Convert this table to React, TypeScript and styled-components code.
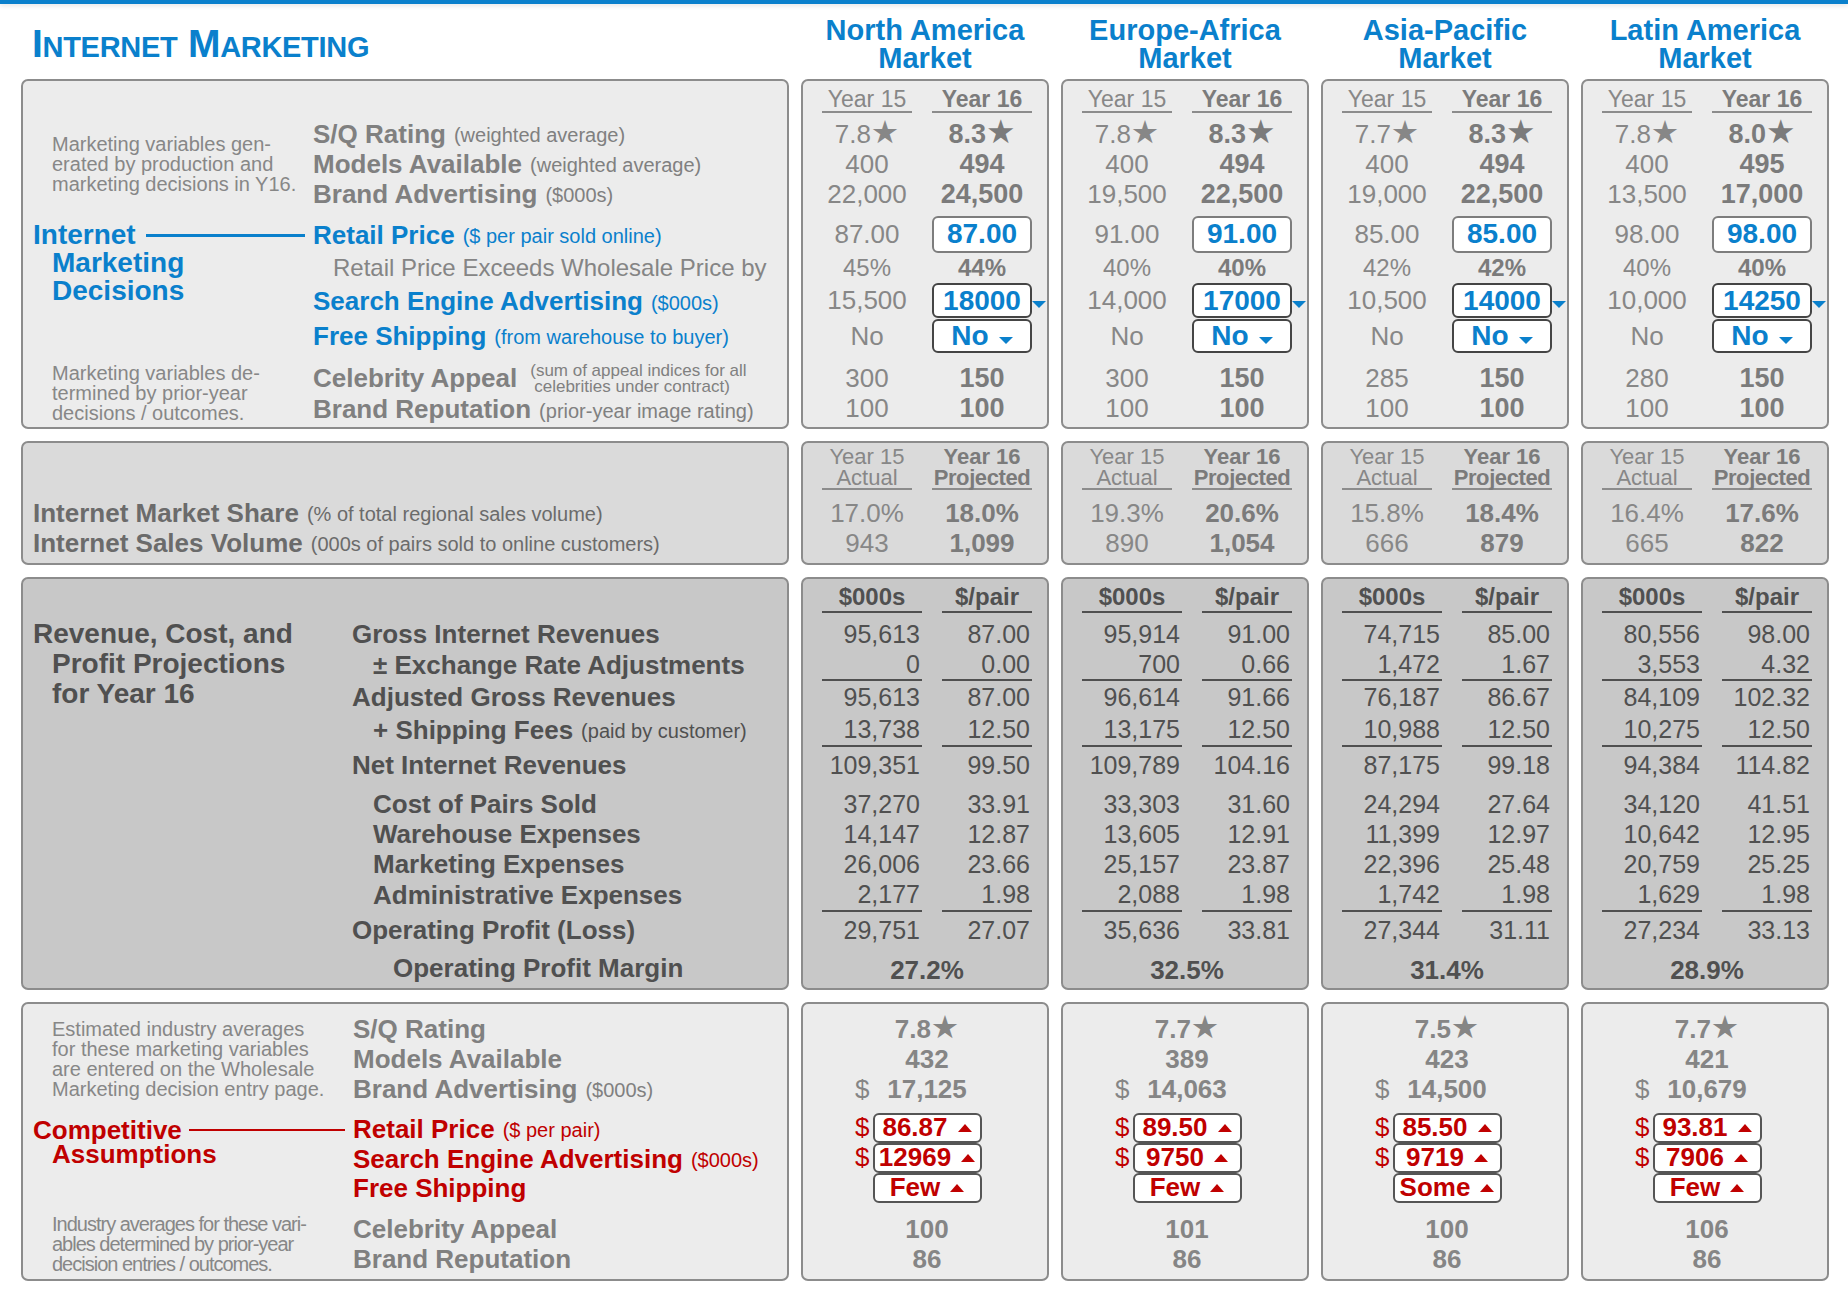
import React from 'react';
import styled, { createGlobalStyle, css } from 'styled-components';

const BLUE = '#0a80cc';
const RED = '#c00000';
const GRAY = '#808080';
const DARK = '#505050';

interface MarketData {
  name: string;
  // sq, models, brand, price, markup, search, shipping, celebrity, reputation
  y15: string[];
  y16: string[];
  share: string[];
  pnl: [string, string][];
  margin: string;
  industry: {
    sq: string;
    models: string;
    brand: string;
    price: string;
    search: string;
    shipping: string;
    celebrity: string;
    reputation: string;
  };
}

const markets: MarketData[] = [
  {
    name: 'North America',
    y15: ['7.8★', '400', '22,000', '87.00', '45%', '15,500', 'No', '300', '100'],
    y16: ['8.3★', '494', '24,500', '87.00', '44%', '18000', 'No', '150', '100'],
    share: ['17.0%', '943', '18.0%', '1,099'],
    pnl: [
      ['95,613', '87.00'],
      ['0', '0.00'],
      ['95,613', '87.00'],
      ['13,738', '12.50'],
      ['109,351', '99.50'],
      ['37,270', '33.91'],
      ['14,147', '12.87'],
      ['26,006', '23.66'],
      ['2,177', '1.98'],
      ['29,751', '27.07'],
    ],
    margin: '27.2%',
    industry: {
      sq: '7.8★',
      models: '432',
      brand: '17,125',
      price: '86.87',
      search: '12969',
      shipping: 'Few',
      celebrity: '100',
      reputation: '86',
    },
  },
  {
    name: 'Europe-Africa',
    y15: ['7.8★', '400', '19,500', '91.00', '40%', '14,000', 'No', '300', '100'],
    y16: ['8.3★', '494', '22,500', '91.00', '40%', '17000', 'No', '150', '100'],
    share: ['19.3%', '890', '20.6%', '1,054'],
    pnl: [
      ['95,914', '91.00'],
      ['700', '0.66'],
      ['96,614', '91.66'],
      ['13,175', '12.50'],
      ['109,789', '104.16'],
      ['33,303', '31.60'],
      ['13,605', '12.91'],
      ['25,157', '23.87'],
      ['2,088', '1.98'],
      ['35,636', '33.81'],
    ],
    margin: '32.5%',
    industry: {
      sq: '7.7★',
      models: '389',
      brand: '14,063',
      price: '89.50',
      search: '9750',
      shipping: 'Few',
      celebrity: '101',
      reputation: '86',
    },
  },
  {
    name: 'Asia-Pacific',
    y15: ['7.7★', '400', '19,000', '85.00', '42%', '10,500', 'No', '285', '100'],
    y16: ['8.3★', '494', '22,500', '85.00', '42%', '14000', 'No', '150', '100'],
    share: ['15.8%', '666', '18.4%', '879'],
    pnl: [
      ['74,715', '85.00'],
      ['1,472', '1.67'],
      ['76,187', '86.67'],
      ['10,988', '12.50'],
      ['87,175', '99.18'],
      ['24,294', '27.64'],
      ['11,399', '12.97'],
      ['22,396', '25.48'],
      ['1,742', '1.98'],
      ['27,344', '31.11'],
    ],
    margin: '31.4%',
    industry: {
      sq: '7.5★',
      models: '423',
      brand: '14,500',
      price: '85.50',
      search: '9719',
      shipping: 'Some',
      celebrity: '100',
      reputation: '86',
    },
  },
  {
    name: 'Latin America',
    y15: ['7.8★', '400', '13,500', '98.00', '40%', '10,000', 'No', '280', '100'],
    y16: ['8.0★', '495', '17,000', '98.00', '40%', '14250', 'No', '150', '100'],
    share: ['16.4%', '665', '17.6%', '822'],
    pnl: [
      ['80,556', '98.00'],
      ['3,553', '4.32'],
      ['84,109', '102.32'],
      ['10,275', '12.50'],
      ['94,384', '114.82'],
      ['34,120', '41.51'],
      ['10,642', '12.95'],
      ['20,759', '25.25'],
      ['1,629', '1.98'],
      ['27,234', '33.13'],
    ],
    margin: '28.9%',
    industry: {
      sq: '7.7★',
      models: '421',
      brand: '10,679',
      price: '93.81',
      search: '7906',
      shipping: 'Few',
      celebrity: '106',
      reputation: '86',
    },
  },
];

interface PnlLine {
  label: string;
  sub?: string;
  h: number;
  indent?: boolean;
  rule?: boolean;
  gapBefore?: number;
}

const pnlLines: PnlLine[] = [
  { label: 'Gross Internet Revenues', h: 30 },
  { label: '± Exchange Rate Adjustments', h: 32, indent: true, rule: true },
  { label: 'Adjusted Gross Revenues', h: 32 },
  { label: '+ Shipping Fees', sub: '(paid by customer)', h: 34, indent: true, rule: true },
  { label: 'Net Internet Revenues', h: 36 },
  { label: 'Cost of Pairs Sold', h: 30, indent: true, gapBefore: 6 },
  { label: 'Warehouse Expenses', h: 30, indent: true },
  { label: 'Marketing Expenses', h: 30, indent: true },
  { label: 'Administrative Expenses', h: 33, indent: true, rule: true },
  { label: 'Operating Profit (Loss)', h: 36 },
];

const GlobalStyle = createGlobalStyle`
  html, body {
    margin: 0;
    padding: 0;
    background: #ffffff;
  }
  body {
    font-family: "Liberation Sans", Arial, "DejaVu Sans", sans-serif;
  }
`;

const TopBar = styled.div`
  height: 4px;
  background: ${BLUE};
  box-shadow: 0 2px 4px rgba(0, 0, 0, 0.1);
`;

const Header = styled.div`
  display: grid;
  grid-template-columns: 768px repeat(4, 248px);
  column-gap: 12px;
  height: 75px;
  padding-left: 21px;
`;

const Board = styled.div`
  display: grid;
  grid-template-columns: 768px repeat(4, 248px);
  grid-template-rows: 350px 124px 413px 279px;
  column-gap: 12px;
  row-gap: 12px;
  padding-left: 21px;
`;

const Title = styled.h1`
  margin: 0;
  align-self: start;
  padding: 20px 0 0 11px;
  font-size: 39px;
  line-height: 39px;
  font-weight: bold;
  color: ${BLUE};
  white-space: nowrap;
  letter-spacing: -0.3px;
`;

const SmallCaps = styled.span`
  font-size: 29px;
`;

const MarketHead = styled.div`
  align-self: end;
  padding-bottom: 7px;
  text-align: center;
  font-size: 29px;
  line-height: 28px;
  font-weight: bold;
  color: ${BLUE};
`;

const Panel = styled.div<{ $bg: string }>`
  box-sizing: border-box;
  background: ${(p) => p.$bg};
  border: 2px solid #8c8c8c;
  border-radius: 7px;
`;

const LeftPanel = styled(Panel)<{ $top: number }>`
  padding: ${(p) => p.$top}px 0 0 10px;
`;

const ColPanel = styled(Panel)<{ $pad: number }>`
  padding-left: ${(p) => p.$pad}px;
`;

const Group = styled.div<{ $side: number; $gap?: number }>`
  display: grid;
  grid-template-columns: ${(p) => p.$side}px 1fr;
  margin-top: ${(p) => p.$gap ?? 0}px;
`;

const Note = styled.div<{ $tight?: boolean }>`
  align-self: center;
  padding-left: 19px;
  font-size: 20px;
  line-height: 20px;
  color: #878787;
  white-space: nowrap;
  letter-spacing: ${(p) => (p.$tight ? '-1px' : '0')};
`;

const Heading = styled.div<{ $tone: string; $size: number; $lh: number; $pad: number }>`
  align-self: start;
  padding-top: ${(p) => p.$pad}px;
  color: ${(p) => p.$tone};
  font-size: ${(p) => p.$size}px;
  line-height: ${(p) => p.$lh}px;
  font-weight: bold;
  white-space: nowrap;
`;

const HeadLine = styled.div`
  display: flex;
  align-items: center;
`;

const Indent = styled.div`
  padding-left: 19px;
`;

const Connector = styled.span<{ $tone: string; $thick: number; $lead: number }>`
  flex: 1;
  height: ${(p) => p.$thick}px;
  background: ${(p) => p.$tone};
  margin: 0 8px 0 ${(p) => p.$lead}px;
`;

const Stack = styled.div`
  display: flex;
  flex-direction: column;
`;

const Label = styled.div<{ $h: number; $tone?: string; $indent?: number; $drop?: number }>`
  box-sizing: border-box;
  height: ${(p) => p.$h}px;
  display: flex;
  align-items: center;
  padding-left: ${(p) => p.$indent ?? 0}px;
  padding-top: ${(p) => p.$drop ?? 0}px;
  font-size: 26px;
  font-weight: bold;
  color: ${(p) => p.$tone ?? GRAY};
  white-space: nowrap;
`;

const Sub = styled.span`
  margin-left: 8px;
  padding-top: 3px;
  font-size: 20px;
  font-weight: normal;
`;

const PlainLabel = styled.div<{ $h: number }>`
  height: ${(p) => p.$h}px;
  display: flex;
  align-items: center;
  padding-left: 20px;
  font-size: 24px;
  color: #858585;
  white-space: nowrap;
`;

const FinePrint = styled.span`
  display: inline-flex;
  flex-direction: column;
  margin-left: 13px;
  padding-top: 2px;
  font-size: 17px;
  line-height: 16px;
  font-weight: normal;
`;

const FineSecond = styled.span`
  padding-left: 4px;
`;

const Gap = styled.div<{ $h: number }>`
  height: ${(p) => p.$h}px;
`;

const Pair = styled.div<{ $h: number; $cols?: string }>`
  display: grid;
  grid-template-columns: ${(p) => p.$cols ?? '90px 100px'};
  column-gap: 20px;
  height: ${(p) => p.$h}px;
  align-items: center;
`;

const YearHead = styled.div<{ $bold?: boolean; $stacked?: boolean }>`
  box-sizing: border-box;
  align-self: stretch;
  display: flex;
  flex-direction: column;
  justify-content: flex-end;
  align-items: center;
  padding-bottom: ${(p) => (p.$stacked ? 0 : 2)}px;
  border-bottom: 2px solid #8c8c8c;
  font-size: ${(p) => (p.$stacked ? 22 : 23)}px;
  line-height: ${(p) => (p.$stacked ? 21 : 20)}px;
  font-weight: ${(p) => (p.$bold ? 'bold' : 'normal')};
  color: ${(p) => (p.$bold ? '#7b7b7b' : '#878787')};
  white-space: nowrap;
`;

const YearLine = styled.span<{ $squeeze?: boolean }>`
  letter-spacing: ${(p) => (p.$squeeze ? '-0.4px' : '0')};
`;

const Prior = styled.div<{ $size?: number }>`
  text-align: center;
  font-size: ${(p) => p.$size ?? 26}px;
  color: #878787;
  white-space: nowrap;
`;

const Current = styled.div<{ $size?: number }>`
  text-align: center;
  font-size: ${(p) => p.$size ?? 27}px;
  font-weight: bold;
  color: #7b7b7b;
  white-space: nowrap;
`;

const Star = styled.span`
  font-size: 1.22em;
  line-height: 0;
  font-weight: normal;
`;

const Entry = styled.div<{ $h: number; $frame: string; $tone: string; $size: number }>`
  position: relative;
  box-sizing: border-box;
  height: ${(p) => p.$h}px;
  border: 2px solid ${(p) => p.$frame};
  border-radius: 6px;
  background: #ffffff;
  display: flex;
  align-items: center;
  justify-content: center;
  gap: 10px;
  font-size: ${(p) => p.$size}px;
  font-weight: bold;
  color: ${(p) => p.$tone};
  white-space: nowrap;
`;

const Caret = styled.span<{ $up?: boolean; $tone: string; $outside?: boolean }>`
  display: inline-block;
  width: 0;
  height: 0;
  border-left: 7px solid transparent;
  border-right: 7px solid transparent;
  ${(p) =>
    p.$up
      ? css`
          border-bottom: 8px solid ${p.$tone};
        `
      : css`
          border-top: 7px solid ${p.$tone};
          margin-top: 8px;
        `}
  ${(p) =>
    p.$outside &&
    css`
      position: absolute;
      right: -16px;
      top: 50%;
      margin-top: 0;
    `}
`;

const Num = styled.div<{ $rule?: boolean }>`
  box-sizing: border-box;
  align-self: stretch;
  display: flex;
  align-items: center;
  justify-content: flex-end;
  padding-right: 2px;
  border-bottom: ${(p) => (p.$rule ? `2px solid ${DARK}` : 'none')};
  font-size: 25px;
  color: ${DARK};
  white-space: nowrap;
`;

const LedgerHead = styled.div`
  box-sizing: border-box;
  align-self: stretch;
  display: flex;
  align-items: flex-end;
  justify-content: center;
  padding-bottom: 1px;
  border-bottom: 2px solid ${DARK};
  font-size: 24px;
  line-height: 26px;
  font-weight: bold;
  color: ${DARK};
`;

const MarginCell = styled.div`
  grid-column: 1 / -1;
  padding-top: 4px;
  text-align: center;
  font-size: 26px;
  font-weight: bold;
  color: ${DARK};
`;

const AvgRow = styled.div<{ $h: number }>`
  display: grid;
  grid-template-columns: 1fr 109px 1fr;
  height: ${(p) => p.$h}px;
  align-items: center;
`;

const Avg = styled.div`
  grid-column: 2;
  text-align: center;
  font-size: 26px;
  font-weight: bold;
  color: #858585;
  white-space: nowrap;
`;

const Dollar = styled.div<{ $tone: string }>`
  grid-column: 1;
  justify-self: end;
  margin-right: 3px;
  font-size: 26px;
  color: ${(p) => p.$tone};
`;

const Flag = styled(Entry)`
  grid-column: 2;
`;

function Rated({ value }: { value: string }) {
  if (!value.endsWith('★')) return <>{value}</>;
  return (
    <>
      {value.slice(0, -1)}
      <Star>★</Star>
    </>
  );
}

function DecisionColumn({ m }: { m: MarketData }) {
  const [sq, models, brand, price, markup, search, ship, celeb, rep] = m.y15;
  const [sq16, models16, brand16, price16, markup16, search16, ship16, celeb16, rep16] = m.y16;
  return (
    <ColPanel $bg="#ececec" $pad={19}>
      <Pair $h={32}>
        <YearHead>Year 15</YearHead>
        <YearHead $bold>Year 16</YearHead>
      </Pair>
      <Gap $h={6} />
      <Pair $h={30}>
        <Prior>
          <Rated value={sq} />
        </Prior>
        <Current>
          <Rated value={sq16} />
        </Current>
      </Pair>
      <Pair $h={30}>
        <Prior>{models}</Prior>
        <Current>{models16}</Current>
      </Pair>
      <Pair $h={30}>
        <Prior>{brand}</Prior>
        <Current>{brand16}</Current>
      </Pair>
      <Gap $h={6} />
      <Pair $h={38}>
        <Prior>{price}</Prior>
        <Entry $h={37} $frame="#7d7d7d" $tone={BLUE} $size={28}>
          {price16}
        </Entry>
      </Pair>
      <Pair $h={30}>
        <Prior $size={24}>{markup}</Prior>
        <Current $size={24}>{markup16}</Current>
      </Pair>
      <Pair $h={35}>
        <Prior>{search}</Prior>
        <Entry $h={35} $frame="#454545" $tone={BLUE} $size={28}>
          {search16}
          <Caret $tone={BLUE} $outside />
        </Entry>
      </Pair>
      <Pair $h={36}>
        <Prior>{ship}</Prior>
        <Entry $h={34} $frame="#454545" $tone={BLUE} $size={28}>
          {ship16}
          <Caret $tone={BLUE} />
        </Entry>
      </Pair>
      <Gap $h={9} />
      <Pair $h={30}>
        <Prior>{celeb}</Prior>
        <Current>{celeb16}</Current>
      </Pair>
      <Pair $h={30}>
        <Prior>{rep}</Prior>
        <Current>{rep16}</Current>
      </Pair>
    </ColPanel>
  );
}

function ShareColumn({ m }: { m: MarketData }) {
  const [share15, volume15, share16, volume16] = m.share;
  return (
    <ColPanel $bg="#dadada" $pad={19}>
      <Pair $h={47}>
        <YearHead $stacked>
          <YearLine>Year 15</YearLine>
          <YearLine>Actual</YearLine>
        </YearHead>
        <YearHead $stacked $bold>
          <YearLine>Year 16</YearLine>
          <YearLine $squeeze>Projected</YearLine>
        </YearHead>
      </Pair>
      <Gap $h={8} />
      <Pair $h={30}>
        <Prior>{share15}</Prior>
        <Current $size={26}>{share16}</Current>
      </Pair>
      <Pair $h={30}>
        <Prior>{volume15}</Prior>
        <Current $size={26}>{volume16}</Current>
      </Pair>
    </ColPanel>
  );
}

function ProjectionColumn({ m }: { m: MarketData }) {
  return (
    <ColPanel $bg="#c8c8c8" $pad={19}>
      <Pair $h={34} $cols="100px 90px">
        <LedgerHead>$000s</LedgerHead>
        <LedgerHead>$/pair</LedgerHead>
      </Pair>
      <Gap $h={6} />
      {pnlLines.map((line, i) => (
        <React.Fragment key={line.label}>
          {line.gapBefore && <Gap $h={line.gapBefore} />}
          <Pair $h={line.h} $cols="100px 90px">
            <Num $rule={line.rule}>{m.pnl[i][0]}</Num>
            <Num $rule={line.rule}>{m.pnl[i][1]}</Num>
          </Pair>
        </React.Fragment>
      ))}
      <Pair $h={40} $cols="100px 90px">
        <MarginCell>{m.margin}</MarginCell>
      </Pair>
    </ColPanel>
  );
}

function IndustryColumn({ m }: { m: MarketData }) {
  const c = m.industry;
  return (
    <ColPanel $bg="#ececec" $pad={4}>
      <Gap $h={10} />
      <AvgRow $h={30}>
        <Avg>
          <Rated value={c.sq} />
        </Avg>
      </AvgRow>
      <AvgRow $h={30}>
        <Avg>{c.models}</Avg>
      </AvgRow>
      <AvgRow $h={30}>
        <Dollar $tone="#858585">$</Dollar>
        <Avg>{c.brand}</Avg>
      </AvgRow>
      <Gap $h={8} />
      <AvgRow $h={30}>
        <Dollar $tone={RED}>$</Dollar>
        <Flag $h={30} $frame="#555555" $tone={RED} $size={26}>
          {c.price}
          <Caret $up $tone={RED} />
        </Flag>
      </AvgRow>
      <AvgRow $h={30}>
        <Dollar $tone={RED}>$</Dollar>
        <Flag $h={30} $frame="#555555" $tone={RED} $size={26}>
          {c.search}
          <Caret $up $tone={RED} />
        </Flag>
      </AvgRow>
      <AvgRow $h={31}>
        <Flag $h={30} $frame="#555555" $tone={RED} $size={26}>
          {c.shipping}
          <Caret $up $tone={RED} />
        </Flag>
      </AvgRow>
      <Gap $h={11} />
      <AvgRow $h={30}>
        <Avg>{c.celebrity}</Avg>
      </AvgRow>
      <AvgRow $h={30}>
        <Avg>{c.reputation}</Avg>
      </AvgRow>
    </ColPanel>
  );
}

export default function App() {
  return (
    <>
      <GlobalStyle />
      <TopBar />
      <Header>
        <Title>
          I<SmallCaps>NTERNET</SmallCaps> M<SmallCaps>ARKETING</SmallCaps>
        </Title>
        {markets.map((m) => (
          <MarketHead key={m.name}>
            {m.name}
            <br />
            Market
          </MarketHead>
        ))}
      </Header>
      <Board>
        <LeftPanel $bg="#ececec" $top={38}>
          <Group $side={280}>
            <Note>
              Marketing variables gen-
              <br />
              erated by production and
              <br />
              marketing decisions in Y16.
            </Note>
            <Stack>
              <Label $h={30}>
                S/Q Rating<Sub>(weighted average)</Sub>
              </Label>
              <Label $h={30}>
                Models Available<Sub>(weighted average)</Sub>
              </Label>
              <Label $h={30}>
                Brand Advertising<Sub>($000s)</Sub>
              </Label>
            </Stack>
          </Group>
          <Group $side={280} $gap={6}>
            <Heading $tone={BLUE} $size={28} $lh={28} $pad={6}>
              <HeadLine>
                Internet
                <Connector $tone={BLUE} $thick={3} $lead={10} />
              </HeadLine>
              <Indent>Marketing</Indent>
              <Indent>Decisions</Indent>
            </Heading>
            <Stack>
              <Label $h={38} $tone={BLUE} $drop={2}>
                Retail Price<Sub>($ per pair sold online)</Sub>
              </Label>
              <PlainLabel $h={30}>Retail Price Exceeds Wholesale Price by</PlainLabel>
              <Label $h={35} $tone={BLUE} $drop={2}>
                Search Engine Advertising<Sub>($000s)</Sub>
              </Label>
              <Label $h={36} $tone={BLUE}>
                Free Shipping<Sub>(from warehouse to buyer)</Sub>
              </Label>
            </Stack>
          </Group>
          <Group $side={280} $gap={9}>
            <Note>
              Marketing variables de-
              <br />
              termined by prior-year
              <br />
              decisions / outcomes.
            </Note>
            <Stack>
              <Label $h={30}>
                Celebrity Appeal
                <FinePrint>
                  <span>(sum of appeal indices for all</span>
                  <FineSecond>celebrities under contract)</FineSecond>
                </FinePrint>
              </Label>
              <Label $h={30} $drop={3}>
                Brand Reputation<Sub>(prior-year image rating)</Sub>
              </Label>
            </Stack>
          </Group>
        </LeftPanel>
        {markets.map((m) => (
          <DecisionColumn key={m.name} m={m} />
        ))}

        <LeftPanel $bg="#dadada" $top={55}>
          <Label $h={30} $tone="#6b6b6b">
            Internet Market Share<Sub>(% of total regional sales volume)</Sub>
          </Label>
          <Label $h={30} $tone="#6b6b6b">
            Internet Sales Volume<Sub>(000s of pairs sold to online customers)</Sub>
          </Label>
        </LeftPanel>
        {markets.map((m) => (
          <ShareColumn key={m.name} m={m} />
        ))}

        <LeftPanel $bg="#c8c8c8" $top={40}>
          <Group $side={319}>
            <Heading $tone={DARK} $size={28} $lh={30} $pad={0}>
              <div>Revenue, Cost, and</div>
              <Indent>Profit Projections</Indent>
              <Indent>for Year 16</Indent>
            </Heading>
            <Stack>
              {pnlLines.map((line) => (
                <React.Fragment key={line.label}>
                  {line.gapBefore && <Gap $h={line.gapBefore} />}
                  <Label $h={line.h} $tone={DARK} $indent={line.indent ? 21 : 0}>
                    {line.label}
                    {line.sub && <Sub>{line.sub}</Sub>}
                  </Label>
                </React.Fragment>
              ))}
              <Label $h={40} $tone={DARK} $indent={41}>
                Operating Profit Margin
              </Label>
            </Stack>
          </Group>
        </LeftPanel>
        {markets.map((m) => (
          <ProjectionColumn key={m.name} m={m} />
        ))}

        <LeftPanel $bg="#ececec" $top={10}>
          <Group $side={320}>
            <Note>
              Estimated industry averages
              <br />
              for these marketing variables
              <br />
              are entered on the Wholesale
              <br />
              Marketing decision entry page.
            </Note>
            <Stack>
              <Label $h={30}>S/Q Rating</Label>
              <Label $h={30}>Models Available</Label>
              <Label $h={30}>
                Brand Advertising<Sub>($000s)</Sub>
              </Label>
            </Stack>
          </Group>
          <Group $side={320} $gap={8}>
            <Heading $tone={RED} $size={26} $lh={24} $pad={6}>
              <HeadLine>
                Competitive
                <Connector $tone={RED} $thick={2} $lead={7} />
              </HeadLine>
              <Indent>Assumptions</Indent>
            </Heading>
            <Stack>
              <Label $h={30} $tone={RED} $drop={4}>
                Retail Price<Sub>($ per pair)</Sub>
              </Label>
              <Label $h={30} $tone={RED} $drop={4}>
                Search Engine Advertising<Sub>($000s)</Sub>
              </Label>
              <Label $h={31} $tone={RED} $drop={2}>
                Free Shipping
              </Label>
            </Stack>
          </Group>
          <Group $side={320} $gap={11}>
            <Note $tight>
              Industry averages for these vari-
              <br />
              ables determined by prior-year
              <br />
              decision entries / outcomes.
            </Note>
            <Stack>
              <Label $h={30}>Celebrity Appeal</Label>
              <Label $h={30}>Brand Reputation</Label>
            </Stack>
          </Group>
        </LeftPanel>
        {markets.map((m) => (
          <IndustryColumn key={m.name} m={m} />
        ))}
      </Board>
    </>
  );
}
